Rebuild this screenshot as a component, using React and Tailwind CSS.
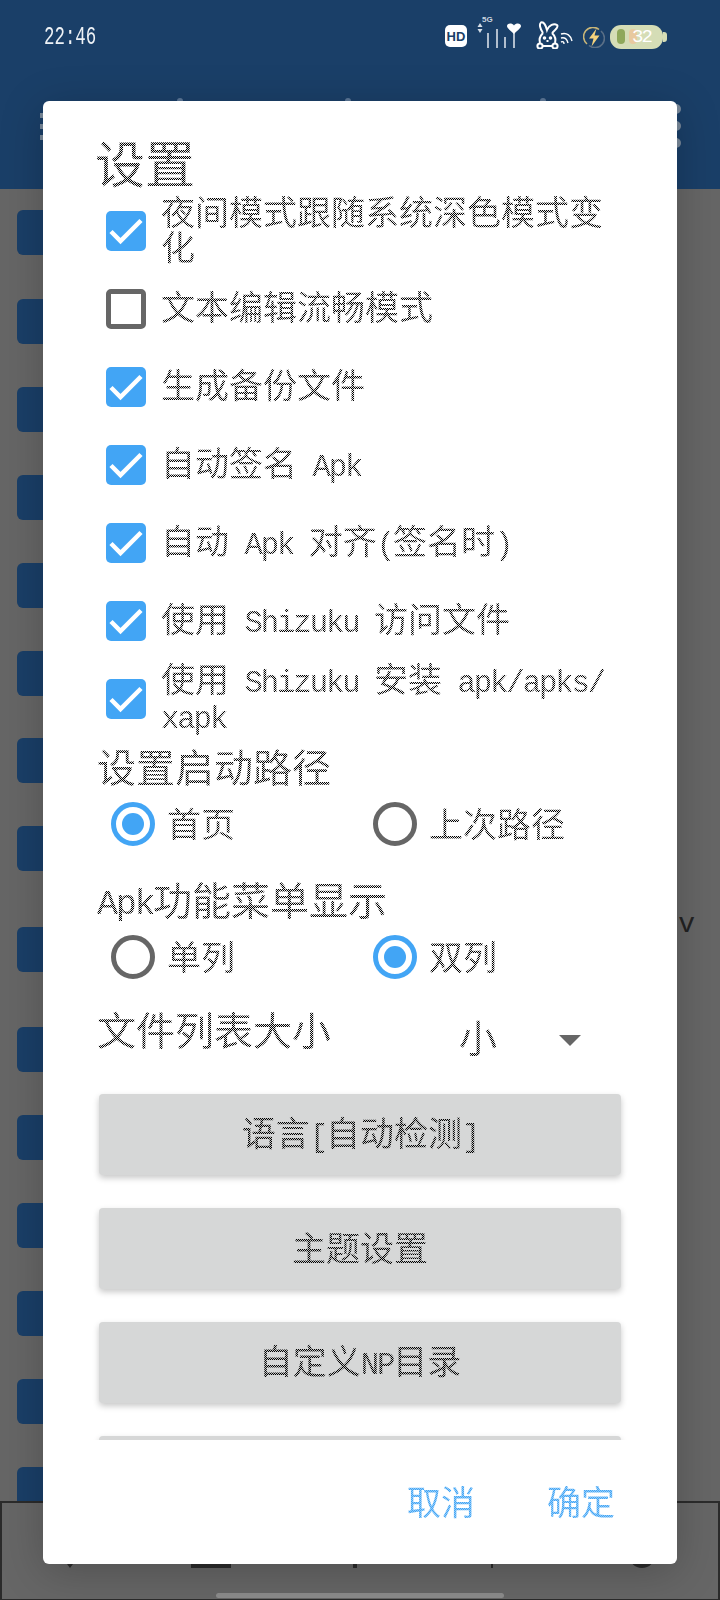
import React from 'react';

const dotted = "bg-[repeating-conic-gradient(#000000_0_25%,#00000018_0_50%)] bg-[length:2px_2px] bg-clip-text text-transparent [font-family:'Liberation_Mono','Noto_Sans_CJK_SC',monospace] [word-spacing:-5px]";
const dottedBlue = "bg-[repeating-conic-gradient(#42a5f5_0_25%,#42a5f590_0_50%)] bg-[length:2px_2px] bg-clip-text text-transparent [font-family:'Liberation_Mono','Noto_Sans_CJK_SC',monospace]";

const L = ({ children }) => <span className="text-[0.9em] tracking-[-0.067em]">{children}</span>;

const Check = ({ on }) =>
  on ? (
    <div className="w-10 h-10 shrink-0 rounded-[5px] bg-[#42a5f5]">
      <svg width="40" height="40" viewBox="0 0 40 40" fill="none" stroke="white" strokeWidth="4.5">
        <path d="M5 20.5 L14.5 30 L35 9.5" />
      </svg>
    </div>
  ) : (
    <div className="w-10 h-10 shrink-0 rounded-[5px] border-[5px] border-[#666666] bg-white" />
  );

const CheckRow = ({ on = true, children }) => (
  <div className="h-[78px] flex items-center pl-[9px]">
    <Check on={on} />
    <div className={`ml-[15px] pt-[5px] text-[34px] leading-[35px] ${dotted}`}>{children}</div>
  </div>
);

const Radio = ({ on, label }) => (
  <div className="w-[262px] flex items-center">
    <div className={`w-11 h-11 shrink-0 rounded-full border-[5px] bg-white flex items-center justify-center ${on ? 'border-[#42a5f5]' : 'border-[#666666]'}`}>
      {on && <div className="w-[22px] h-[22px] rounded-full bg-[#42a5f5]" />}
    </div>
    <span className={`ml-[12px] pt-[8px] text-[34px] leading-[44px] ${dotted}`}>{label}</span>
  </div>
);

const SectionTitle = ({ children }) => (
  <div className={`h-[62px] pt-[6px] flex items-center text-[39px] leading-[56px] ${dotted}`}>{children}</div>
);

const Btn = ({ children }) => (
  <div className="h-[81px] mb-[33px] ml-[2px] w-[522px] shrink-0 rounded-[4px] bg-[#d6d7d7] shadow-[0_3px_6px_rgba(0,0,0,0.22)] flex items-center justify-center">
    <span className={`pt-[6px] text-[34px] leading-[40px] ${dotted}`}>{children}</span>
  </div>
);

const listRows = [89, 88, 88, 88, 88, 87, 88, 101, 100, 88, 88, 88, 88, 88, 88];

const Background = () => (
  <div className="flex-1 bg-[#666666] pt-[21px] overflow-hidden">
    {listRows.map((h, i) => (
      <div key={i} className="flex items-start justify-between" style={{ height: h }}>
        <div className="ml-[17px] w-[46px] h-[45px] rounded-[6px] bg-[#1a3f68]" />
        {i === 7 && (
          <span className="self-end -mb-[8px] mr-[25px] text-[28px] leading-[20px] text-[#222222] [font-family:'Liberation_Mono',monospace]">v</span>
        )}
      </div>
    ))}
  </div>
);

const StatusIcons = () => (
  <div className="flex items-start mr-[53px]">
    <div className="mt-[25px] w-[22px] h-[22px] rounded-[5px] bg-white flex items-center justify-center text-[#1a3f68] text-[13px] leading-none font-bold [font-family:'Liberation_Sans',sans-serif]">HD</div>
    <div className="relative ml-[10px] mt-[16px] w-[44px] h-[34px]">
      <span className="absolute left-[5px] -top-[1px] text-[8px] leading-[9px] font-bold text-[#c9d3df] [font-family:'Liberation_Sans',sans-serif]">5G</span>
      <svg width="44" height="34" viewBox="0 0 44 34" fill="none">
        <path d="M3 7 L5.5 11 H0.5 Z M3 17 L5.5 13 H0.5 Z" fill="#d7dfe8" />
        <path d="M11 17 V32 M20 13 V32 M28 21 V32 M37 15 V32" stroke="#d7dfe8" strokeWidth="1.6" />
        <path d="M37 18 C33 14 30 12 30 10 C30 7 35 6.5 37 9.5 C39 6.5 44 7 44 10 C44 12 41 14 37 18 Z" fill="white" />
      </svg>
    </div>
    <svg className="ml-[15px] mt-[21px]" width="37" height="28" viewBox="0 0 37 28" fill="none" stroke="white" strokeWidth="2">
      <path d="M7 12 C4 8 3 3 5 1.5 C8 0.5 10 5 11 9 C13 4 18 2 21 4 C23 6 18 10 16 12" />
      <path d="M7 12 C4 15 3 19 4 22 M16 12 C19 15 20 19 19 22 M7 25 H16" />
      <circle cx="4" cy="25" r="2.6" />
      <circle cx="19" cy="25" r="2.6" />
      <circle cx="8.5" cy="17" r="0.8" fill="white" />
      <circle cx="14.5" cy="17" r="0.8" fill="white" />
      <path d="M10.5 20 H12.5" />
      <path d="M25 21 C27 20 28 21 28 23 M25 17 C29 16 31 18 32 22 M25 13 C31 11 35 15 36 20" strokeWidth="1.4" />
    </svg>
    <svg className="ml-[10px] mt-[27px]" width="22" height="21" viewBox="0 0 22 21" fill="none">
      <path d="M16 2.5 A9 9 0 0 0 4 17" stroke="#c9b678" strokeWidth="1.6" />
      <path d="M6 18.5 A9 9 0 0 0 18 4" stroke="#5a6f86" strokeWidth="1.6" />
      <path d="M13.5 1.5 L6 11.5 H10.5 L8.5 19.5 L16.5 8.5 H11.5 Z" fill="#f4d27c" />
    </svg>
    <div className="ml-[5px] mt-[25px] flex items-center">
      <div className="relative w-[53px] h-[24px] rounded-[11px] bg-[#d5ddb6]">
        <div className="absolute left-[7px] top-[4px] w-[8px] h-[15px] rounded-[4px] bg-[#8fa85b]" />
        <div className="absolute left-[19px] top-[4px] w-[8px] h-[15px] rounded-[4px] bg-[#e8c99f]" />
        <span className="absolute left-[22px] top-[2px] text-[19px] leading-[20px] text-white [font-family:'Liberation_Mono',monospace] tracking-[-2px]">32</span>
      </div>
      <div className="w-[4px] h-[10px] rounded-r-[3px] bg-[#d5ddb6]" />
    </div>
  </div>
);

const Header = () => (
  <div className="h-[189px] shrink-0 bg-[#1a3f68] flex flex-col">
    <div className="h-[96px] flex justify-between">
      <div className="ml-[44px] mt-[22px] h-[30px] w-[52px]">
        <span className="inline-block origin-left scale-x-[0.67] text-[26px] leading-[30px] text-[#eef2f6] [font-family:'Liberation_Mono',monospace]">22:46</span>
      </div>
      <StatusIcons />
    </div>
    {/* toolbar, mostly behind the dialog */}
    <div className="flex items-start">
      <div className="ml-[40px] w-[4px]">
        <div className="mt-[17px] h-[5px] bg-[#7a8a9b]" />
        <div className="mt-[6px] h-[5px] bg-[#7a8a9b]" />
        <div className="mt-[6px] h-[5px] bg-[#7a8a9b]" />
      </div>
      <div className="ml-[133px] mt-[2px] w-[6px] h-[4px] rounded-t-full bg-[#5d7898]" />
      <div className="ml-[162px] mt-[2px] w-[6px] h-[4px] rounded-t-full bg-[#5d7898]" />
      <div className="ml-[189px] mt-[2px] w-[6px] h-[4px] rounded-t-full bg-[#5d7898]" />
      <div className="ml-[125px] mt-[8px] flex flex-col gap-[7px]">
        <div className="w-[10px] h-[10px] rounded-full bg-[#7a8a9b]" />
        <div className="w-[10px] h-[10px] rounded-full bg-[#7a8a9b]" />
        <div className="w-[10px] h-[10px] rounded-full bg-[#7a8a9b]" />
      </div>
    </div>
  </div>
);

const BottomBar = () => (
  <div className="h-[99px] shrink-0 bg-[#666666] border-t-2 border-x-2 border-b border-[#2b2b2b] flex flex-col">
    <div className="h-[65px] flex items-end">
      <div className="ml-[62px] w-0 h-0 border-x-[6px] border-x-transparent border-t-[8px] border-t-[#2b2b2b]" />
      <div className="ml-[115px] w-[40px] h-[8px] bg-[#2b2b2b]" />
      <div className="ml-[122px] w-[4px] h-[6px] bg-[#2b2b2b]" />
      <div className="ml-[134px] w-[2px] h-[6px] bg-[#2b2b2b]" />
      <div className="ml-[136px] w-[26px] h-[26px] rounded-full bg-[#2b2b2b]" />
    </div>
    <div className="mt-[25px] mx-auto w-[288px] h-[5px] rounded-full bg-[#8c8c8c]" />
  </div>
);

const Dialog = () => (
  <div className="absolute left-[43px] top-[101px] w-[634px] h-[1463px] rounded-[6px] bg-white shadow-[0_8px_44px_rgba(0,0,0,0.22)] flex flex-col">
    <div className="h-[1339px] shrink-0 overflow-hidden pl-[54px]">
      <div className={`pt-[44px] -ml-[2px] h-[91px] text-[50px] leading-[50px] ${dotted}`}>设置</div>
      <CheckRow>夜间模式跟随系统深色模式变<br />化</CheckRow>
      <CheckRow on={false}>文本编辑流畅模式</CheckRow>
      <CheckRow>生成备份文件</CheckRow>
      <CheckRow>自动签名 <L>Apk</L></CheckRow>
      <CheckRow>自动 <L>Apk</L> 对齐<L>(</L>签名时<L>)</L></CheckRow>
      <CheckRow>使用 <L>Shizuku</L> 访问文件</CheckRow>
      <CheckRow>使用 <L>Shizuku</L> 安装 <L>apk/apks/</L><br /><L>xapk</L></CheckRow>
      <SectionTitle>设置启动路径</SectionTitle>
      <div className="h-[48px] mb-[23px] flex items-center pl-[14px]">
        <Radio on label="首页" />
        <Radio label="上次路径" />
      </div>
      <SectionTitle><L>Apk</L>功能菜单显示</SectionTitle>
      <div className="h-[48px] mb-[24px] flex items-center pl-[14px]">
        <Radio label="单列" />
        <Radio on label="双列" />
      </div>
      <div className="h-[58px] mb-[31px] flex items-center">
        <span className={`pt-[3px] text-[39px] leading-[55px] ${dotted}`}>文件列表大小</span>
        <span className={`ml-[128px] mt-[16px] text-[38px] leading-[50px] ${dotted}`}>小</span>
        <div className="ml-[62px] mt-[12px] w-0 h-0 border-x-[11px] border-x-transparent border-t-[11px] border-t-[#666666]" />
      </div>
      <Btn>语言<L>[</L>自动检测<L>]</L></Btn>
      <Btn>主题设置</Btn>
      <Btn>自定义<L>NP</L>目录</Btn>
      <Btn>{' '}</Btn>
    </div>
    <div className="flex justify-end pt-[46px] pr-[62px] gap-[72px]">
      <span className={`text-[34px] leading-[40px] ${dottedBlue}`}>取消</span>
      <span className={`text-[34px] leading-[40px] ${dottedBlue}`}>确定</span>
    </div>
  </div>
);

const App = () => (
  <div className="relative w-[720px] h-[1600px] overflow-hidden flex flex-col bg-[#666666]">
    <Header />
    <Background />
    <BottomBar />
    <Dialog />
  </div>
);

export default App;
